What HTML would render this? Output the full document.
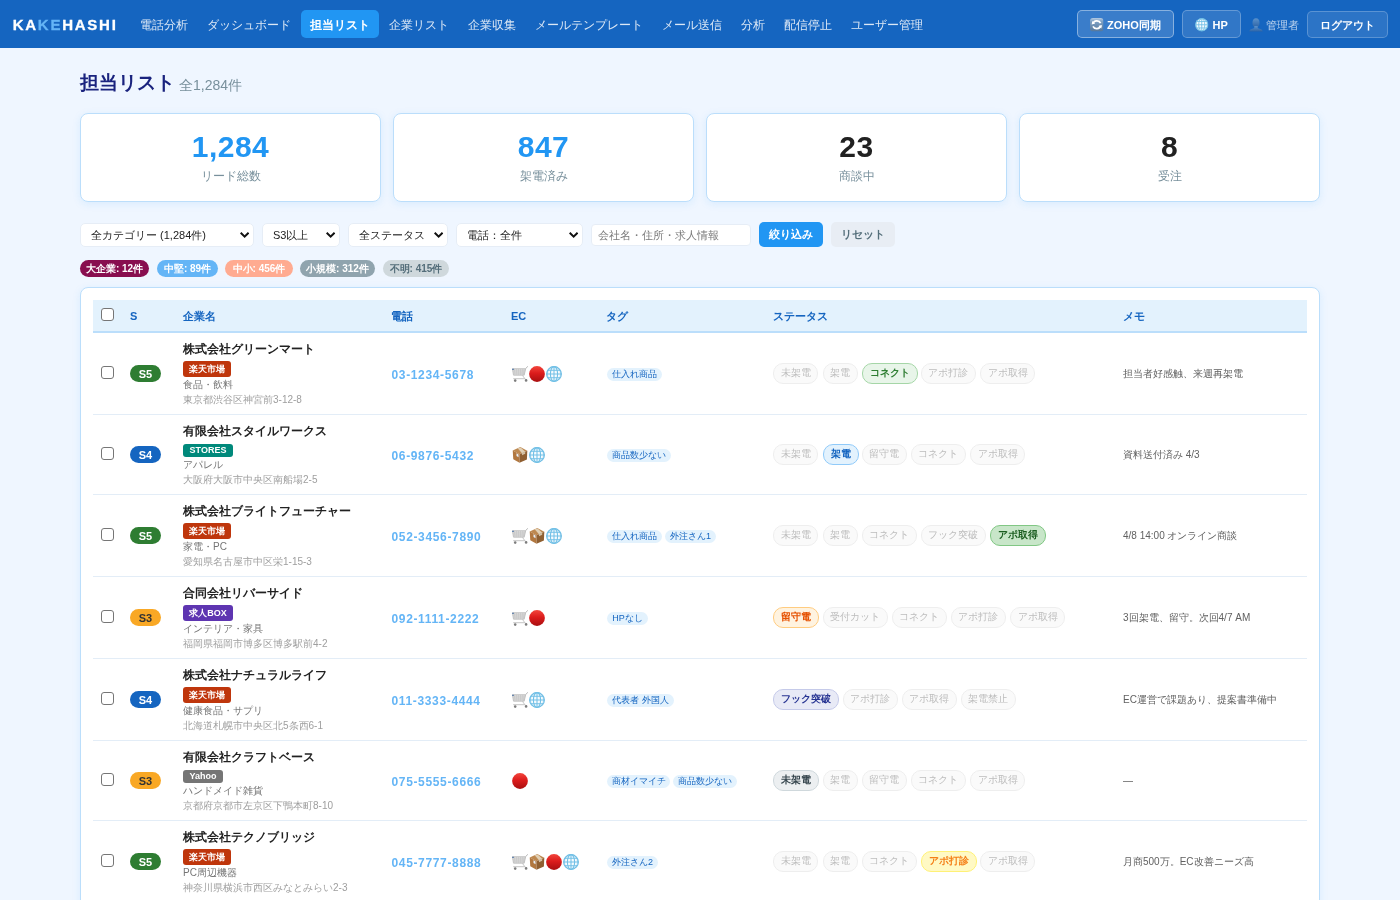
<!DOCTYPE html>
<html lang="ja"><head><meta charset="utf-8"><title>担当リスト</title>
<style>
*{box-sizing:border-box;margin:0;padding:0}
html,body{width:1400px;height:900px;overflow:hidden}
body{will-change:transform;background:#eff6ff;font-family:"Liberation Sans",sans-serif;color:#212121;position:relative}
.abs,.nav a,.nav span,.nav div{position:absolute}
.nav{position:absolute;left:0;top:0;width:1400px;height:48px;background:#1565c0}
.logo{left:12.700px;top:15.800px;font-size:15px;line-height:18px;font-weight:700;letter-spacing:1.750px;-webkit-text-stroke:.3px currentColor;color:#fff;white-space:nowrap}
.logo b{color:#64b5f6}
.nav a{top:10px;height:28px;line-height:30px;font-size:12px;color:rgba(255,255,255,.85);text-align:center;border-radius:5px;white-space:nowrap;text-decoration:none}
.nav a.on{background:#2196f3;color:#fff;font-weight:700}
.nb{top:10px;height:28px;border-radius:5px;border:1px solid rgba(255,255,255,.25);background:rgba(255,255,255,.12);color:#fff;font-size:11px;font-weight:700;line-height:28px;white-space:nowrap}
.nb svg{position:absolute}
.nb i{position:absolute;font-style:normal;top:0}
h1{position:absolute;left:80px;top:70px;font-size:19.2px;line-height:26px;font-weight:700;color:#1a237e;white-space:nowrap}
.cnt{position:absolute;left:179px;top:75px;font-size:14px;line-height:20px;color:#78909c;white-space:nowrap}
.stat{position:absolute;top:113px;width:301px;height:89px;background:#fff;border:1px solid #bbdefb;border-radius:8px;box-shadow:0 2px 8px rgba(33,150,243,.1);text-align:center}
.stat .n{position:absolute;left:0;right:0;top:15px;font-size:30px;line-height:36px;font-weight:700;letter-spacing:.5px}
.stat .l{position:absolute;left:0;right:0;top:53px;font-size:12px;line-height:18px;color:#78909c}
.sel{position:absolute;top:223px;height:24px;background:#fff;border:1px solid #e6edf6;border-radius:5px;font-size:11px;line-height:22px;color:#212121;padding-left:10px;white-space:nowrap}
.sel svg{position:absolute;right:3.5px;top:8px}
.inp{position:absolute;left:591px;top:224px;width:160px;height:22px;background:#fff;border:1px solid #e6edf6;border-radius:4px;font-size:11px;line-height:20px;color:#7a7a7a;padding-left:6px;white-space:nowrap}
.btn{position:absolute;top:222px;height:25px;border-radius:5px;font-size:11px;line-height:25px;text-align:center;white-space:nowrap}
.chip{position:absolute;top:260px;height:17px;border-radius:8.5px;font-size:10px;line-height:17px;font-weight:700;text-align:center;white-space:nowrap}
.card{position:absolute;left:80px;top:287px;width:1240px;height:700px;background:#fff;border:1px solid #bbdefb;border-radius:8px;box-shadow:0 2px 8px rgba(33,150,243,.1)}
.th{position:absolute;left:12px;top:12px;width:1214px;height:33px;background:#e3f2fd;border-bottom:2px solid #bbdefb}
.th span{position:absolute;top:9px;font-size:11px;line-height:14px;font-weight:700;color:#1565c0;white-space:nowrap}
.cb{position:absolute;left:8px;width:13px;height:13px;border:1px solid #767676;border-radius:3px;background:#fff}
.row{position:absolute;left:12px;width:1214px;border-bottom:1px solid #e3edf7}
.row>*{position:absolute;white-space:nowrap}
.sb{left:37px;width:31px;height:17px;border-radius:9px;font-size:11px;line-height:18.600px;font-weight:700;text-align:center}
.nm{left:90px;top:8px;font-size:12px;line-height:17px;font-weight:700;color:#212121}
.tg{left:90px;border-radius:3px;color:#fff;font-size:9px;font-weight:700;text-align:center}
.ct{left:90px;font-size:10px;line-height:14px;color:#757575}
.ad{left:90px;font-size:10px;line-height:14px;color:#9e9e9e}
.tel{left:298.500px;font-size:12px;line-height:16px;font-weight:700;color:#64b5f6;letter-spacing:.65px}
.ec{left:419px;height:16px}
.ec svg{position:absolute;top:0}
.pl{height:13px;border-radius:7px;background:#e3f2fd;color:#1565c0;font-size:9px;line-height:13px;text-align:center}
.stp{height:20.4px;border-radius:10px;border:1px solid #eeeeee;background:#fafafa;color:#bdbdbd;font-size:10px;line-height:18px;text-align:center}
.memo{left:1030px;font-size:10px;line-height:14px;color:#616161}
</style></head>
<body>

<svg width="0" height="0" style="position:absolute">
<defs>
<linearGradient id="gRed" x1="0" y1="0" x2="0" y2="1"><stop offset="0" stop-color="#f2453c"/><stop offset=".45" stop-color="#dc1c1c"/><stop offset="1" stop-color="#a90f10"/></linearGradient>
<linearGradient id="gGry" x1="0" y1="0" x2="0" y2="1"><stop offset="0" stop-color="#b4cbe3"/><stop offset=".25" stop-color="#7fa1c4"/><stop offset="1" stop-color="#54769a"/></linearGradient>
<linearGradient id="gUsr" x1="0" y1="0" x2="0" y2="1"><stop offset="0" stop-color="#5b92cc"/><stop offset="1" stop-color="#2c63a6"/></linearGradient>
<symbol id="red" viewBox="0 0 16 16"><circle cx="8" cy="8" r="7.9" fill="url(#gRed)"/></symbol>
<symbol id="globe" viewBox="0 0 16 16"><circle cx="8" cy="8" r="7.4" fill="#f6fbfe" stroke="#6dbde4" stroke-width="1.1"/>
<g fill="none" stroke="#72c0e6" stroke-width="1.050"><ellipse cx="8" cy="8" rx="3.600" ry="7.400"/><ellipse cx="8" cy="8" rx="6.600" ry="7.400" stroke-width=".6"/><path d="M8 .6v14.8M.6 8h14.8M1.700 4.200h12.600M1.700 11.800h12.600"/></g></symbol>
<symbol id="cart" viewBox="0 0 16 16"><path d="M.4 2.700h13.300l-1.500 6.500H1.500z" fill="#dedede" stroke="#b1b1b1" stroke-width=".7"/>
<path d="M2.500 3l.5 6M4.500 3l.4 6M6.500 3l.2 6M8.500 3l-.1 6M10.400 3l-.4 6M12.200 3l-.8 6M.9 5h12.300M1.200 7h11.500" stroke="#bdbdbd" stroke-width=".5" fill="none"/>
<path d="M15.700.3l-1.900 2.300" fill="none" stroke="#b5b5b5" stroke-width="1"/>
<path d="M10.300 9.200l2.700 3.700M1.200 12.700h12" fill="none" stroke="#c6c6c6" stroke-width="1"/>
<rect x="0" y="2.700" width="2" height="1.100" rx=".3" fill="#4a73a6"/>
<circle cx="3.200" cy="14.600" r="1.300" fill="#7d7d7d"/><circle cx="14.100" cy="14.400" r="1.300" fill="#7d7d7d"/></symbol>
<symbol id="box" viewBox="0 0 16 16"><path d="M8.300 0L15.300 3.800 7.500 7.300.7 3.400z" fill="#bd8850"/><path d="M.7 3.400L7.500 7.300V15.800L1.300 12.200z" fill="#b1773f"/><path d="M7.500 7.300L15.300 3.800 14.900 12.400 7.500 15.800z" fill="#8f5f31"/>
<path d="M5.700 1.200L8.700.5 13.200 4.700 10 6.200z" fill="#e0cfb4"/><path d="M10 6.200l3.200-1.500v2.100l-3.200 1.500z" fill="#d3c2a6"/><path d="M4.500 6.200l2 1.200v2.800l-2-1.200z" fill="#e6eff8"/></symbol>
<symbol id="sync" viewBox="0 0 13.500 13.500"><rect width="13.500" height="13.500" rx="3" fill="url(#gGry)"/><g fill="none" stroke="#fff" stroke-width="1.700"><path d="M3 5.700A4 3.600 0 0 1 10.600 5.200"/><path d="M10.600 7.800A4 3.600 0 0 1 3 8.400"/></g><path d="M1.700 6.400L2.300 3.100 5.200 5.600z" fill="#fff"/><path d="M11.900 7.100L11.300 10.400 8.400 7.900z" fill="#fff"/></symbol>
<symbol id="user" viewBox="0 0 14 14"><g fill="url(#gUsr)"><ellipse cx="7" cy="4.800" rx="3.500" ry="4.600"/><path d="M5.300 8h3.400v1.600c0 .5.300.7 1 .9 2.400.6 3.900 1.300 4.100 3.100H.2c.2-1.800 1.700-2.500 4.100-3.100.7-.2 1-.4 1-.9z"/></g></symbol>
<symbol id="chev" viewBox="0 0 9.300 6"><path d="M0 1.400L1.400 0 4.650 3.200 7.900 0 9.300 1.400 4.650 6z" fill="#111"/></symbol>
</defs></svg>

<div class="nav">
<div class="logo">KA<b>KE</b>HASHI</div>
<a class="" style="left:131px;width:66px">電話分析</a>
<a class="" style="left:198px;width:102px">ダッシュボード</a>
<a class="on" style="left:301px;width:78px">担当リスト</a>
<a class="" style="left:380px;width:78px">企業リスト</a>
<a class="" style="left:459px;width:66px">企業収集</a>
<a class="" style="left:526px;width:126px">メールテンプレート</a>
<a class="" style="left:653px;width:78px">メール送信</a>
<a class="" style="left:732px;width:42px">分析</a>
<a class="" style="left:775px;width:66px">配信停止</a>
<a class="" style="left:842px;width:90px">ユーザー管理</a>
<div class="nb" style="left:1077px;width:97px;background:rgba(255,255,255,.16);border-color:rgba(255,255,255,.4)"><svg width="13.5" height="13.5" style="left:12.3px;top:7.4px"><use href="#sync"/></svg><i style="left:29px">ZOHO同期</i></div>
<div class="nb" style="left:1182px;width:59px"><svg width="13.5" height="13.5" style="left:12.3px;top:7.4px"><use href="#globe"/></svg><i style="left:29.5px">HP</i></div>
<div style="left:1249px;top:18px;width:14px;height:14px"><svg width="14" height="14" style="position:absolute;left:0;top:0"><use href="#user"/></svg></div>
<span style="left:1266px;top:17px;font-size:11px;line-height:16px;color:rgba(255,255,255,.7);white-space:nowrap">管理者</span>
<div class="nb" style="left:1307px;top:11px;width:81px;height:27px;line-height:26px;text-align:center;background:rgba(255,255,255,.1);border-color:rgba(255,255,255,.22)">ログアウト</div>
</div>
<h1>担当リスト</h1><div class="cnt">全1,284件</div>
<div class="stat" style="left:80px"><div class="n" style="color:#2196f3">1,284</div><div class="l">リード総数</div></div>
<div class="stat" style="left:393px"><div class="n" style="color:#2196f3">847</div><div class="l">架電済み</div></div>
<div class="stat" style="left:706px"><div class="n" style="color:#212121">23</div><div class="l">商談中</div></div>
<div class="stat" style="left:1019px"><div class="n" style="color:#212121">8</div><div class="l">受注</div></div>
<div class="sel" style="left:80px;width:174px">全カテゴリー (1,284件)<svg width="9.3" height="6"><use href="#chev"/></svg></div>
<div class="sel" style="left:262px;width:78px">S3以上<svg width="9.3" height="6"><use href="#chev"/></svg></div>
<div class="sel" style="left:348px;width:100px">全ステータス<svg width="9.3" height="6"><use href="#chev"/></svg></div>
<div class="sel" style="left:456px;width:127px">電話：全件<svg width="9.3" height="6"><use href="#chev"/></svg></div>
<div class="inp">会社名・住所・求人情報</div>
<div class="btn" style="left:759px;width:64px;background:#2196f3;color:#fff;font-weight:700">絞り込み</div>
<div class="btn" style="left:831px;width:64px;background:#e8edf4;color:#546e7a;font-weight:700">リセット</div>
<div class="chip" style="left:80px;width:69px;background:#880e4f;color:#fff">大企業: 12件</div>
<div class="chip" style="left:157px;width:61px;background:#64b5f6;color:#fff">中堅: 89件</div>
<div class="chip" style="left:225px;width:68px;background:#ffab91;color:#fff">中小: 456件</div>
<div class="chip" style="left:300px;width:75px;background:#90a4ae;color:#fff">小規模: 312件</div>
<div class="chip" style="left:383px;width:66px;background:#cfd8dc;color:#546e7a">不明: 415件</div>
<div class="card">
<div class="th"><div class="cb" style="top:8px"></div>
<span style="left:37px">S</span>
<span style="left:90px">企業名</span>
<span style="left:298px">電話</span>
<span style="left:418px">EC</span>
<span style="left:513px">タグ</span>
<span style="left:680px">ステータス</span>
<span style="left:1030px">メモ</span>
</div>
<div class="row" style="top:45px;height:82px">
<div class="cb" style="top:33.0px"></div>
<div class="sb" style="top:32.0px;background:#2e7d32;color:#fff">S5</div>
<div class="nm">株式会社グリーンマート</div>
<div class="tg" style="top:28px;height:16px;line-height:16px;width:48px;background:#bf360c">楽天市場</div>
<div class="ct" style="top:45px">食品・飲料</div><div class="ad" style="top:60px">東京都渋谷区神宮前3-12-8</div>
<div class="tel" style="top:33.5px">03-1234-5678</div>
<div class="ec" style="top:33.0px"><svg width="16" height="16" style="left:0.0px"><use href="#cart"/></svg><svg width="16" height="16" style="left:17.1px"><use href="#red"/></svg><svg width="16" height="16" style="left:34.2px"><use href="#globe"/></svg></div>
<div class="pl" style="left:514px;top:34.5px;width:55px">仕入れ商品</div>
<div class="stp" style="left:680.3px;top:30.3px;width:45.2px">未架電</div>
<div class="stp" style="left:729.5px;top:30.3px;width:35.2px">架電</div>
<div class="stp" style="left:768.7px;top:30.3px;width:56.2px;background:#e8f5e9;border-color:#a5d6a7;color:#2e7d32;font-weight:700">コネクト</div>
<div class="stp" style="left:827.9px;top:30.3px;width:55.2px">アポ打診</div>
<div class="stp" style="left:887.1px;top:30.3px;width:55.2px">アポ取得</div>
<div class="memo" style="top:34.0px">担当者好感触、来週再架電</div>
</div>
<div class="row" style="top:127px;height:80px">
<div class="cb" style="top:32.0px"></div>
<div class="sb" style="top:31.0px;background:#1565c0;color:#fff">S4</div>
<div class="nm">有限会社スタイルワークス</div>
<div class="tg" style="top:29.200px;height:12.800px;line-height:12.800px;width:50px;background:#00897b">STORES</div>
<div class="ct" style="top:43px">アパレル</div><div class="ad" style="top:58px">大阪府大阪市中央区南船場2-5</div>
<div class="tel" style="top:32.5px">06-9876-5432</div>
<div class="ec" style="top:32.0px"><svg width="16" height="16" style="left:0.0px"><use href="#box"/></svg><svg width="16" height="16" style="left:17.1px"><use href="#globe"/></svg></div>
<div class="pl" style="left:514px;top:33.5px;width:64px">商品数少ない</div>
<div class="stp" style="left:680.3px;top:29.3px;width:45.2px">未架電</div>
<div class="stp" style="left:729.5px;top:29.3px;width:36.2px;background:#e3f2fd;border-color:#90caf9;color:#1565c0;font-weight:700">架電</div>
<div class="stp" style="left:768.7px;top:29.3px;width:45.2px">留守電</div>
<div class="stp" style="left:817.9px;top:29.3px;width:55.2px">コネクト</div>
<div class="stp" style="left:877.1px;top:29.3px;width:55.2px">アポ取得</div>
<div class="memo" style="top:33.0px">資料送付済み 4/3</div>
</div>
<div class="row" style="top:207px;height:82px">
<div class="cb" style="top:33.0px"></div>
<div class="sb" style="top:32.0px;background:#2e7d32;color:#fff">S5</div>
<div class="nm">株式会社ブライトフューチャー</div>
<div class="tg" style="top:28px;height:16px;line-height:16px;width:48px;background:#bf360c">楽天市場</div>
<div class="ct" style="top:45px">家電・PC</div><div class="ad" style="top:60px">愛知県名古屋市中区栄1-15-3</div>
<div class="tel" style="top:33.5px">052-3456-7890</div>
<div class="ec" style="top:33.0px"><svg width="16" height="16" style="left:0.0px"><use href="#cart"/></svg><svg width="16" height="16" style="left:17.1px"><use href="#box"/></svg><svg width="16" height="16" style="left:34.2px"><use href="#globe"/></svg></div>
<div class="pl" style="left:514px;top:34.5px;width:55px">仕入れ商品</div>
<div class="pl" style="left:572px;top:34.5px;width:51px">外注さん1</div>
<div class="stp" style="left:680.3px;top:30.3px;width:45.2px">未架電</div>
<div class="stp" style="left:729.5px;top:30.3px;width:35.2px">架電</div>
<div class="stp" style="left:768.7px;top:30.3px;width:55.2px">コネクト</div>
<div class="stp" style="left:827.9px;top:30.3px;width:65.2px">フック突破</div>
<div class="stp" style="left:897.1px;top:30.3px;width:56.2px;background:#c8e6c9;border-color:#81c784;color:#1b5e20;font-weight:700">アポ取得</div>
<div class="memo" style="top:34.0px">4/8 14:00 オンライン商談</div>
</div>
<div class="row" style="top:289px;height:82px">
<div class="cb" style="top:33.0px"></div>
<div class="sb" style="top:32.0px;background:#f9a825;color:#333">S3</div>
<div class="nm">合同会社リバーサイド</div>
<div class="tg" style="top:28px;height:16px;line-height:16px;width:50px;background:#5e35b1">求人BOX</div>
<div class="ct" style="top:45px">インテリア・家具</div><div class="ad" style="top:60px">福岡県福岡市博多区博多駅前4-2</div>
<div class="tel" style="top:33.5px">092-1111-2222</div>
<div class="ec" style="top:33.0px"><svg width="16" height="16" style="left:0.0px"><use href="#cart"/></svg><svg width="16" height="16" style="left:17.1px"><use href="#red"/></svg></div>
<div class="pl" style="left:514px;top:34.5px;width:41px">HPなし</div>
<div class="stp" style="left:680.3px;top:30.3px;width:46.2px;background:#fff3e0;border-color:#ffcc80;color:#e65100;font-weight:700">留守電</div>
<div class="stp" style="left:729.5px;top:30.3px;width:65.2px">受付カット</div>
<div class="stp" style="left:798.7px;top:30.3px;width:55.2px">コネクト</div>
<div class="stp" style="left:857.9px;top:30.3px;width:55.2px">アポ打診</div>
<div class="stp" style="left:917.1px;top:30.3px;width:55.2px">アポ取得</div>
<div class="memo" style="top:34.0px">3回架電、留守。次回4/7 AM</div>
</div>
<div class="row" style="top:371px;height:82px">
<div class="cb" style="top:33.0px"></div>
<div class="sb" style="top:32.0px;background:#1565c0;color:#fff">S4</div>
<div class="nm">株式会社ナチュラルライフ</div>
<div class="tg" style="top:28px;height:16px;line-height:16px;width:48px;background:#bf360c">楽天市場</div>
<div class="ct" style="top:45px">健康食品・サプリ</div><div class="ad" style="top:60px">北海道札幌市中央区北5条西6-1</div>
<div class="tel" style="top:33.5px">011-3333-4444</div>
<div class="ec" style="top:33.0px"><svg width="16" height="16" style="left:0.0px"><use href="#cart"/></svg><svg width="16" height="16" style="left:17.1px"><use href="#globe"/></svg></div>
<div class="pl" style="left:514px;top:34.5px;width:67px">代表者 外国人</div>
<div class="stp" style="left:680.3px;top:30.3px;width:66.2px;background:#e8eaf6;border-color:#c5cae9;color:#283593;font-weight:700">フック突破</div>
<div class="stp" style="left:749.5px;top:30.3px;width:55.2px">アポ打診</div>
<div class="stp" style="left:808.7px;top:30.3px;width:55.2px">アポ取得</div>
<div class="stp" style="left:867.9px;top:30.3px;width:55.2px">架電禁止</div>
<div class="memo" style="top:34.0px">EC運営で課題あり、提案書準備中</div>
</div>
<div class="row" style="top:453px;height:80px">
<div class="cb" style="top:32.0px"></div>
<div class="sb" style="top:31.0px;background:#f9a825;color:#333">S3</div>
<div class="nm">有限会社クラフトベース</div>
<div class="tg" style="top:29.200px;height:12.800px;line-height:12.800px;width:40px;background:#757575">Yahoo</div>
<div class="ct" style="top:43px">ハンドメイド雑貨</div><div class="ad" style="top:58px">京都府京都市左京区下鴨本町8-10</div>
<div class="tel" style="top:32.5px">075-5555-6666</div>
<div class="ec" style="top:32.0px"><svg width="16" height="16" style="left:0.0px"><use href="#red"/></svg></div>
<div class="pl" style="left:514px;top:33.5px;width:63px">商材イマイチ</div>
<div class="pl" style="left:580px;top:33.5px;width:64px">商品数少ない</div>
<div class="stp" style="left:680.3px;top:29.3px;width:46.2px;background:#eceff1;border-color:#cfd8dc;color:#37474f;font-weight:700">未架電</div>
<div class="stp" style="left:729.5px;top:29.3px;width:35.2px">架電</div>
<div class="stp" style="left:768.7px;top:29.3px;width:45.2px">留守電</div>
<div class="stp" style="left:817.9px;top:29.3px;width:55.2px">コネクト</div>
<div class="stp" style="left:877.1px;top:29.3px;width:55.2px">アポ取得</div>
<div class="memo" style="top:33.0px">—</div>
</div>
<div class="row" style="top:533px;height:82px">
<div class="cb" style="top:33.0px"></div>
<div class="sb" style="top:32.0px;background:#2e7d32;color:#fff">S5</div>
<div class="nm">株式会社テクノブリッジ</div>
<div class="tg" style="top:28px;height:16px;line-height:16px;width:48px;background:#bf360c">楽天市場</div>
<div class="ct" style="top:45px">PC周辺機器</div><div class="ad" style="top:60px">神奈川県横浜市西区みなとみらい2-3</div>
<div class="tel" style="top:33.5px">045-7777-8888</div>
<div class="ec" style="top:33.0px"><svg width="16" height="16" style="left:0.0px"><use href="#cart"/></svg><svg width="16" height="16" style="left:17.1px"><use href="#box"/></svg><svg width="16" height="16" style="left:34.2px"><use href="#red"/></svg><svg width="16" height="16" style="left:51.3px"><use href="#globe"/></svg></div>
<div class="pl" style="left:514px;top:34.5px;width:51px">外注さん2</div>
<div class="stp" style="left:680.3px;top:30.3px;width:45.2px">未架電</div>
<div class="stp" style="left:729.5px;top:30.3px;width:35.2px">架電</div>
<div class="stp" style="left:768.7px;top:30.3px;width:55.2px">コネクト</div>
<div class="stp" style="left:827.9px;top:30.3px;width:56.2px;background:#fff9c4;border-color:#fff176;color:#f57f17;font-weight:700">アポ打診</div>
<div class="stp" style="left:887.1px;top:30.3px;width:55.2px">アポ取得</div>
<div class="memo" style="top:34.0px">月商500万。EC改善ニーズ高</div>
</div>
</div>
</body></html>
